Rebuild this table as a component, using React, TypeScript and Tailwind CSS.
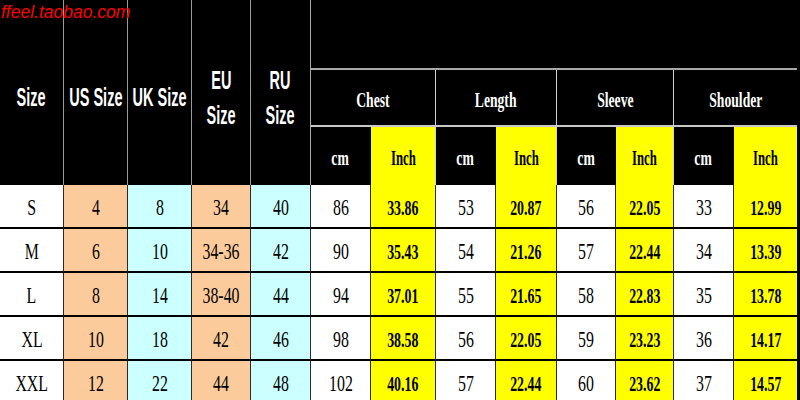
const widths = "grid-cols-[63px_64px_64px_59px_60px_60px_65px_60px_61px_59px_58px_60px_64px]";

const leftHeads = [["Size"], ["US Size"], ["UK Size"], ["EU", "Size"], ["RU", "Size"]];
const groups = ["Chest", "Length", "Sleeve", "Shoulder"];

const rows = [
  ["S", "4", "8", "34", "40", "86", "33.86", "53", "20.87", "56", "22.05", "33", "12.99"],
  ["M", "6", "10", "34-36", "42", "90", "35.43", "54", "21.26", "57", "22.44", "34", "13.39"],
  ["L", "8", "14", "38-40", "44", "94", "37.01", "55", "21.65", "58", "22.83", "35", "13.78"],
  ["XL", "10", "18", "42", "46", "98", "38.58", "56", "22.05", "59", "23.23", "36", "14.17"],
  ["XXL", "12", "22", "44", "48", "102", "40.16", "57", "22.44", "60", "23.62", "37", "14.57"],
];

const cellBg = [
  "bg-white",
  "bg-[#fccb9c]",
  "bg-[#ccffff]",
  "bg-[#fccb9c]",
  "bg-[#ccffff]",
  "bg-white",
  "bg-[#ffff00]",
  "bg-white",
  "bg-[#ffff00]",
  "bg-white",
  "bg-[#ffff00]",
  "bg-white",
  "bg-[#ffff00]",
];

const isInch = (i: number) => i >= 6 && i % 2 === 0;

export default function App() {
  return (
    <div className="relative w-[800px] h-[400px] overflow-hidden bg-black">
      <div className={`grid ${widths} grid-rows-[70px_57px_58px_44px_44px_44px_44px_44px]`}>
        {/* left header cells */}
        {leftHeads.map((lines, i) => (
          <div
            key={i}
            className={`row-span-3 flex flex-col items-center justify-center pt-[10px] text-white font-bold text-[25px] leading-[35px] font-['Liberation_Sans',sans-serif] ${i > 0 ? "border-l border-[#9a9a9a]" : ""}`}
          >
            {lines.map((l) => (
              <span key={l} className="inline-block whitespace-nowrap scale-x-[0.58]">{l}</span>
            ))}
          </div>
        ))}

        {/* measurement block top */}
        <div className="col-span-8 border-l border-b-2 border-[#a8a8a8]" />

        {groups.map((g, i) => (
          <div
            key={g}
            className={`col-span-2 flex items-center justify-center pt-[3px] border-b-2 border-[#c8c8c8] ${i === 0 ? "border-l border-l-[#a8a8a8]" : "border-l border-l-[#d0d0d0]"} text-white font-bold text-[22px] font-['Liberation_Serif',serif]`}
          >
            <span className="inline-block scale-x-[0.62]">{g}</span>
          </div>
        ))}

        {groups.map((g, i) => (
          <div key={g} className="contents">
            <div
              className={`flex items-center justify-center pt-[2px] text-white font-bold text-[22px] font-['Liberation_Serif',serif] border-l ${i === 0 ? "border-[#a8a8a8]" : "border-[#d0d0d0]"}`}
            >
              <span className="inline-block scale-x-[0.62]">cm</span>
            </div>
            <div className="flex items-center justify-center pt-[2px] bg-[#ffff00] text-black font-bold text-[22px] font-['Liberation_Serif',serif] border-l border-black">
              <span className="inline-block scale-x-[0.58]">Inch</span>
            </div>
          </div>
        ))}

        {/* data rows */}
        {rows.map((r, ri) =>
          r.map((v, ci) => (
            <div
              key={`${ri}-${ci}`}
              className={`flex items-center justify-center pt-[2px] border-b-2 border-black ${cellBg[ci]} ${ci > 0 ? "border-l border-l-[#2a2a2a]" : ""} text-black font-['Liberation_Serif',serif] ${isInch(ci) ? "font-bold text-[22px]" : "text-[24px]"}`}
            >
              <span className={`inline-block whitespace-nowrap ${isInch(ci) ? "scale-x-[0.63]" : "scale-x-[0.66]"}`}>{v}</span>
            </div>
          ))
        )}
      </div>

      <div className="absolute left-[1px] top-[-1px] text-[17.5px] italic text-[#ff0000] font-['Liberation_Sans',sans-serif]">
        ffeel.taobao.com
      </div>
    </div>
  );
}
